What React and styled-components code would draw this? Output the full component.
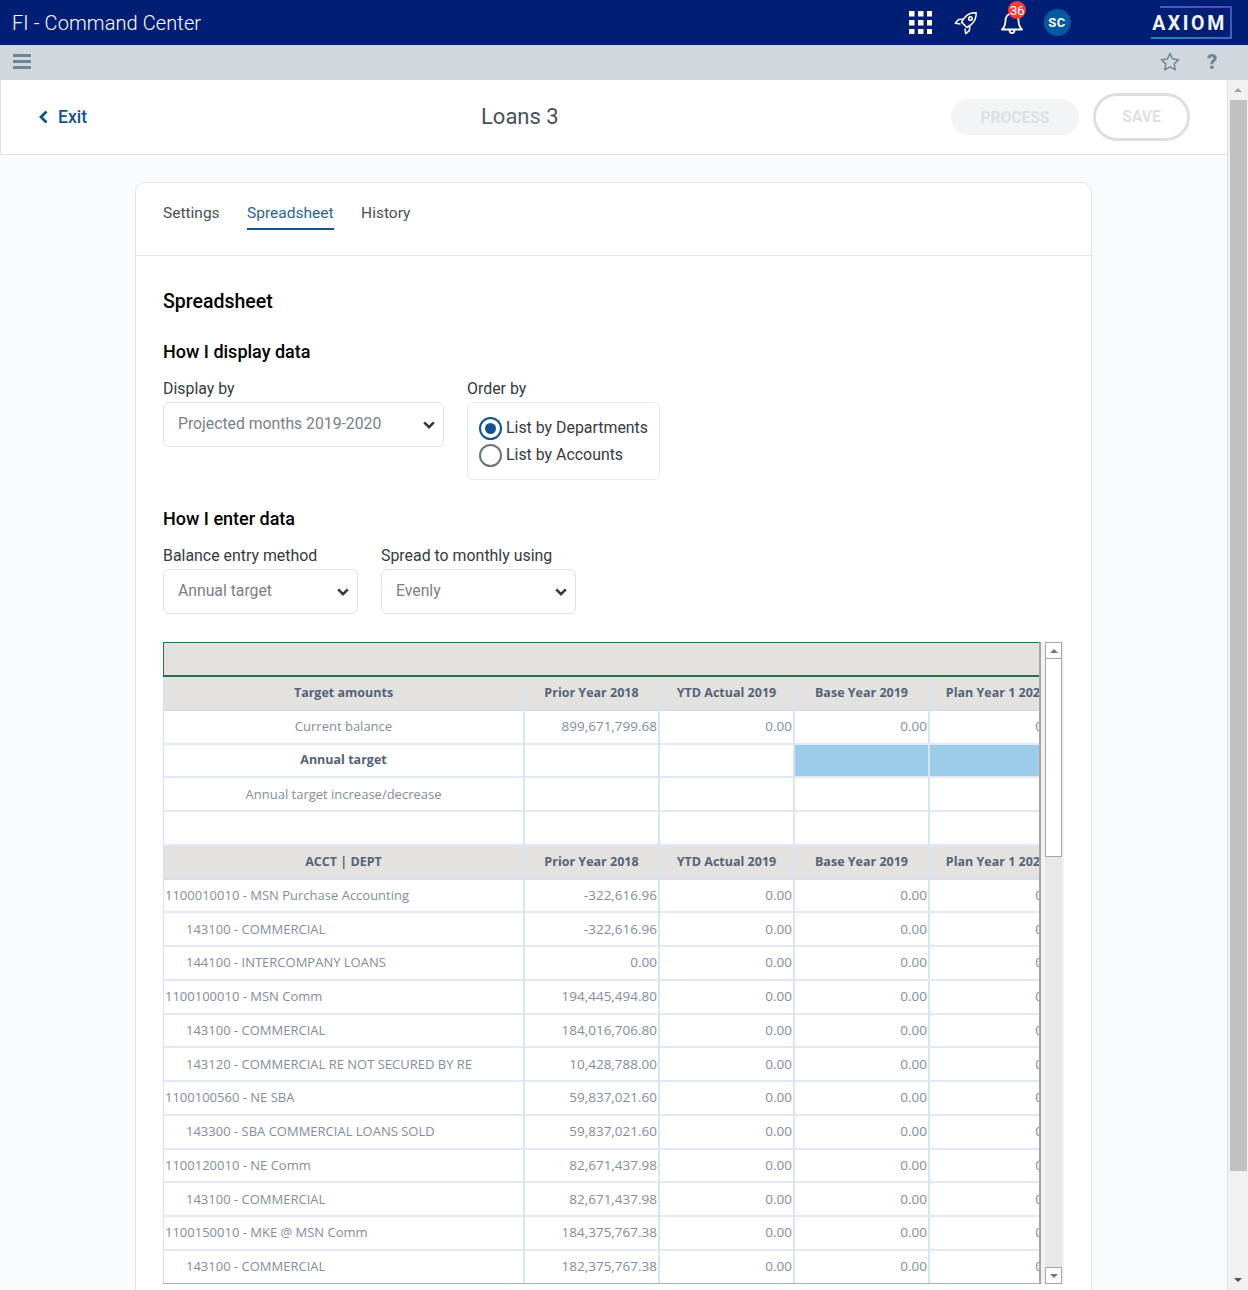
import React from 'react'
import styled, { createGlobalStyle } from 'styled-components'

const GlobalStyle = createGlobalStyle`
  html, body {
    margin: 0;
    padding: 0;
    overflow: hidden;
  }
  body {
    font-family: Roboto, "Liberation Sans", sans-serif;
    background: #fff;
  }
  * {
    box-sizing: border-box;
  }
`

const Frame = styled.div`
  width: 1248px;
  height: 1290px;
  display: flex;
  flex-direction: column;
  overflow: hidden;
`

const TopBar = styled.header`
  height: 45px;
  flex: none;
  background: #001e73;
  display: flex;
  align-items: center;
  padding: 0 16px 0 12px;
  color: #fff;
`

const AppTitle = styled.div`
  font-size: 20px;
  font-weight: 300;
  letter-spacing: 0.1px;
  flex: 1;
`

const TopIcons = styled.div`
  display: flex;
  align-items: center;
  margin-right: 70px;
`

const TopIcon = styled.span`
  position: relative;
  display: flex;
  align-items: center;
  justify-content: center;
  width: ${p => p.$w}px;
`

const Badge = styled.span`
  position: absolute;
  top: -9px;
  left: 19px;
  width: 18px;
  height: 18px;
  border-radius: 50%;
  background: #f53b3b;
  color: #fff;
  font-size: 13.5px;
  letter-spacing: -0.3px;
  line-height: 18px;
  text-align: center;
`

const Avatar = styled.span`
  width: 27px;
  height: 27px;
  border-radius: 50%;
  background: #045a9e;
  color: #fff;
  font-size: 13px;
  font-weight: 700;
  letter-spacing: 0.6px;
  line-height: 27px;
  text-align: center;
`

const Logo = styled.div`
  position: relative;
  width: 82px;
  height: 33px;
  display: flex;
  align-items: center;
  justify-content: center;
  padding: 1px 3px 0 0;
  font-size: 19.5px;
  font-weight: 700;
  letter-spacing: 2.6px;
  color: #f1f4fa;
`

const LogoFrame = styled.svg`
  position: absolute;
  inset: 0;
`

const SubBar = styled.div`
  height: 35px;
  flex: none;
  background: #d0d8dd;
  display: flex;
  align-items: center;
  justify-content: space-between;
  padding: 0 30px 2px 13px;
`

const SubBarRight = styled.div`
  display: flex;
  align-items: center;
  gap: 26px;
`

const Viewport = styled.div`
  flex: 1;
  min-height: 0;
  display: flex;
`

const Page = styled.main`
  width: 1228px;
  background: #fafbfd;
  border-right: 1px solid #dfe2e6;
  overflow: hidden;
`

const PageHeader = styled.div`
  height: 75px;
  background: #fff;
  border: 1px solid #dfe2e6;
  border-top: 0;
  border-right: 0;
  display: grid;
  grid-template-columns: 1fr auto;
  align-items: center;
  position: relative;
  padding: 0 37px 0 37px;
`

const ExitLink = styled.a`
  display: flex;
  align-items: center;
  gap: 9px;
  padding-bottom: 1px;
  color: #0f5490;
  font-size: 17.6px;
  font-weight: 500;
`

const PageTitle = styled.h1`
  position: absolute;
  left: 480px;
  top: 22px;
  margin: 0;
  font-size: 22px;
  line-height: 30px;
  font-weight: 400;
  color: #495057;
`

const HeaderButtons = styled.div`
  display: flex;
  align-items: center;
  gap: 14px;
`

const ProcessButton = styled.button`
  width: 128px;
  height: 36px;
  border: 0;
  border-radius: 18px;
  padding: 1px 0 0;
  background: #f2f4f5;
  color: #dce0e3;
  font: 700 15.6px Roboto, sans-serif;
`

const SaveButton = styled.button`
  width: 97px;
  height: 48px;
  border: 3px solid #dfdfdf;
  border-radius: 24px;
  padding: 0;
  background: #fff;
  color: #dfe2e4;
  font: 700 15.6px Roboto, sans-serif;
`

const Card = styled.section`
  margin: 27px 0 0 135px;
  width: 957px;
  height: 1200px;
  background: #fff;
  border: 1px solid #e0e3e8;
  border-radius: 10px;
`

const Tabs = styled.nav`
  height: 73px;
  border-bottom: 1px solid #e4e6ea;
  display: flex;
  gap: 27.5px;
  padding: 18px 0 0 27px;
`

const Tab = styled.span`
  height: 29px;
  font-size: 15.5px;
  line-height: 24px;
  color: ${p => (p.$active ? '#2a6299' : '#495057')};
  border-bottom: ${p => (p.$active ? '2px solid #0f5490' : '0')};
`

const CardBody = styled.div`
  padding: 34px 27px 0 27px;
`

const SectionTitle = styled.h2`
  margin: 0;
  font-size: 19.5px;
  line-height: 24px;
  font-weight: 500;
  color: #000;
`

const GroupTitle = styled.h3`
  margin: ${p => p.$top}px 0 0;
  font-size: 18px;
  line-height: 24px;
  font-weight: 500;
  color: #000;
`

const FieldRow = styled.div`
  display: flex;
  gap: 23px;
  margin-top: 15px;
  height: ${p => p.$h}px;
`

const Field = styled.div`
  width: ${p => p.$w}px;
`

const FieldLabel = styled.div`
  font-size: 15.9px;
  line-height: 19px;
  color: #343a40;
  margin-bottom: 4px;
`

const SelectBox = styled.div`
  height: 45px;
  border: 1px solid #dee2e6;
  border-radius: 6px;
  background: #fff;
  display: flex;
  align-items: center;
  justify-content: space-between;
  padding: 0 7px 2px 14px;
  font-size: 15.75px;
  color: #7a8087;
  svg {
    margin-top: 3px;
  }
`

const RadioBox = styled.div`
  width: 193px;
  height: 78px;
  border: 1px solid #e9ecef;
  border-radius: 6px;
  padding: 12px 0 0 11px;
`

const RadioRow = styled.label`
  display: flex;
  align-items: center;
  gap: 4px;
  height: 27px;
  font-size: 15.9px;
  color: #343a40;
`

const RadioText = styled.span`
  margin-bottom: 2px;
`

const RadioMark = styled.span`
  width: 23px;
  height: 23px;
  border-radius: 50%;
  background: #fff;
  border: 2px solid ${p => (p.$on ? '#0f5490' : '#6c757d')};
  display: flex;
  align-items: center;
  justify-content: center;
  &::after {
    content: '';
    display: ${p => (p.$on ? 'block' : 'none')};
    width: 11px;
    height: 11px;
    border-radius: 50%;
    background: #0f5490;
  }
`

const SheetWrap = styled.div`
  margin-top: 28px;
  width: 901px;
  height: 643px;
  display: flex;
  align-items: stretch;
  background: #f3f3f3;
  border-bottom: 1px solid #fff;
`

const SheetClip = styled.div`
  width: 878px;
  background: #fff;
  border-right: 2px solid #a6a6a6;
  border-bottom: 1px solid #a9b0c0;
  overflow: hidden;
`

const Banner = styled.div`
  height: 35px;
  width: 876px;
  background: #e3e2e0;
  border: 1px solid #217346;
  border-right: 0;
  border-bottom-width: 2px;
`

const SheetRow = styled.div`
  display: grid;
  grid-template-columns: 361px 135px 135px 135px 135px;
  height: 33.75px;
  width: 903px;
  background: ${p => (p.$head ? '#e3e2e0' : '#fff')};
  border-left: 1px solid #d9e1f2;
  font-family: "Open Sans", "Noto Sans", sans-serif;
  font-size: 13px;
`

const Cell = styled.div`
  border-right: 2px solid #dbe3f3;
  border-bottom: 2px solid ${p => (p.$head ? '#d8dee9' : '#e2e8f5')};
  background: ${p => (p.$fill ? '#9bcdeb' : 'transparent')};
  display: flex;
  align-items: center;
  white-space: nowrap;
  overflow: hidden;
  padding: 0 1px 1px 1px;
  justify-content: ${p => (p.$center ? 'center' : p.$num ? 'flex-end' : 'flex-start')};
  padding-left: ${p => (p.$indent ? '22px' : '1px')};
  color: ${p => (p.$bold ? '#556277' : '#838d9b')};
  font-weight: ${p => (p.$bold ? 700 : 400)};
  font-size: ${p => (p.$bold ? '12.5px' : p.$num ? '13.5px' : '13px')};
`

const InnerScroll = styled.div`
  width: 17px;
  margin-left: 4px;
  background: #e8e8e8;
  display: flex;
  flex-direction: column;
`

const ScrollButton = styled.div`
  height: 17px;
  flex: none;
  background: #fff;
  border: 1px solid #a6a6a6;
  display: flex;
  align-items: center;
  justify-content: center;
  margin-top: ${p => (p.$end ? 'auto' : '0')};
`

const InnerThumb = styled.div`
  height: 198px;
  background: #fff;
  border: 1px solid #a6a6a6;
  border-top: 0;
`

const Arrow = styled.span`
  width: 0;
  height: 0;
  border-left: ${p => p.$s}px solid transparent;
  border-right: ${p => p.$s}px solid transparent;
  border-bottom: ${p => (p.$down ? '0' : `${p.$s}px solid ${p.$c}`)};
  border-top: ${p => (p.$down ? `${p.$s}px solid ${p.$c}` : '0')};
`

const PageScroll = styled.div`
  width: 20px;
  background: #f1f1f1;
  display: flex;
  flex-direction: column;
  align-items: center;
`

const PageScrollEnd = styled.div`
  height: 20px;
  flex: none;
  display: flex;
  align-items: center;
  justify-content: center;
  margin-top: ${p => (p.$end ? 'auto' : '0')};
`

const PageThumb = styled.div`
  width: 17px;
  height: 1071px;
  background: #c1c1c1;
`

const Chevron = () => (
  <svg width="14" height="14" viewBox="0 0 16 16">
    <path d="M2.500 5 8 10.500 13.500 5" fill="none" stroke="#343a40" strokeWidth="3" />
  </svg>
)

const GridIcon = () => (
  <svg width="23" height="23" viewBox="0 0 23 23" fill="#fff">
    {[0, 9, 18].map(y =>
      [0, 9, 18].map(x => <rect key={`${x}-${y}`} x={x} y={y} width="5.5" height="5.5" />)
    )}
  </svg>
)

const RocketIcon = () => (
  <svg width="24" height="24" viewBox="0 0 26 26" fill="none" stroke="#fff" strokeWidth="1.700" strokeLinejoin="round">
    <path d="M24 2c-5.200-.2-9.800 1.800-12.800 5.500l-3 4.500 5.800 5.800 4.500-3c3.700-3 5.700-7.600 5.500-12.800z" />
    <circle cx="17.800" cy="8.200" r="1.900" />
    <path d="M9.800 9 4.800 9.300 1.500 13.300l5.500.8M17 16.200l-.3 5-4 3.300-.8-5.500" />
  </svg>
)

const BellIcon = () => (
  <svg width="24" height="26" viewBox="0 0 24 26" fill="none" stroke="#fff" strokeWidth="1.800" strokeLinejoin="round">
    <path d="M12 3.500c-4 0-6.500 3-6.500 7 0 5-1.500 7-3.500 9h20c-2-2-3.500-4-3.500-9 0-4-2.500-7-6.500-7z" />
    <path d="M9.500 20c0 2 1 3.200 2.500 3.200s2.500-1.200 2.500-3.200" />
  </svg>
)

const MenuIcon = () => (
  <svg width="18" height="15" viewBox="0 0 18 15" fill="#6d8694">
    <rect width="18" height="3" rx="0.5" />
    <rect y="6" width="18" height="3" rx="0.5" />
    <rect y="12" width="18" height="3" rx="0.5" />
  </svg>
)

const StarIcon = () => (
  <svg width="20" height="19" viewBox="0 0 20 19" fill="none" stroke="#6d8694" strokeWidth="1.500" strokeLinejoin="round">
    <path d="M10 1.500l2.600 5.500 6 .8-4.400 4.100 1.100 5.900-5.300-2.900-5.300 2.900 1.100-5.900L1.400 7.800l6-.8z" />
  </svg>
)

const HelpMark = styled.span`
  width: 12px;
  font-size: 20px;
  font-weight: 900;
  line-height: 20px;
  color: #6d8694;
  text-align: center;
`

const targetRows = [
  { label: 'Current balance', nums: ['899,671,799.68', '0.00', '0.00', '0.00'] },
  { label: 'Annual target', bold: true, nums: ['', '', '', ''], fill: true },
  { label: 'Annual target increase/decrease', nums: ['', '', '', ''] },
  { label: '', nums: ['', '', '', ''] },
]

const deptRows = [
  ['1100010010 - MSN Purchase Accounting', '-322,616.96'],
  ['143100 - COMMERCIAL', '-322,616.96', true],
  ['144100 - INTERCOMPANY LOANS', '0.00', true],
  ['1100100010 - MSN Comm', '194,445,494.80'],
  ['143100 - COMMERCIAL', '184,016,706.80', true],
  ['143120 - COMMERCIAL RE NOT SECURED BY RE', '10,428,788.00', true],
  ['1100100560 - NE SBA', '59,837,021.60'],
  ['143300 - SBA COMMERCIAL LOANS SOLD', '59,837,021.60', true],
  ['1100120010 - NE Comm', '82,671,437.98'],
  ['143100 - COMMERCIAL', '82,671,437.98', true],
  ['1100150010 - MKE @ MSN Comm', '184,375,767.38'],
  ['143100 - COMMERCIAL', '182,375,767.38', true],
]

const years = ['Prior Year 2018', 'YTD Actual 2019', 'Base Year 2019', 'Plan Year 1 2020']

const HeadRow = ({ title }) => (
  <SheetRow $head>
    <Cell $head $center $bold>{title}</Cell>
    {years.map(y => (
      <Cell key={y} $head $center $bold>{y}</Cell>
    ))}
  </SheetRow>
)

export default function App() {
  return (
    <Frame>
      <GlobalStyle />
      <TopBar>
        <AppTitle>FI - Command Center</AppTitle>
        <TopIcons>
          <TopIcon $w={46}><GridIcon /></TopIcon>
          <TopIcon $w={46}><RocketIcon /></TopIcon>
          <TopIcon $w={45}><BellIcon /><Badge>36</Badge></TopIcon>
          <TopIcon $w={46}><Avatar>SC</Avatar></TopIcon>
        </TopIcons>
        <Logo>
          <LogoFrame width="82" height="33" viewBox="0 0 82 33" fill="none">
            <defs>
              <linearGradient id="axiomLine" x1="0" y1="1" x2="1" y2="0">
                <stop offset="0" stopColor="#29a9e8" />
                <stop offset="1" stopColor="#7b4fd0" />
              </linearGradient>
            </defs>
            <path d="M10 1h71v31H1" stroke="url(#axiomLine)" strokeWidth="1.500" />
          </LogoFrame>
          AXIOM
        </Logo>
      </TopBar>
      <SubBar>
        <MenuIcon />
        <SubBarRight>
          <StarIcon />
          <HelpMark>?</HelpMark>
        </SubBarRight>
      </SubBar>
      <Viewport>
        <Page>
          <PageHeader>
            <ExitLink>
              <svg width="11" height="14" viewBox="0 0 11 14">
                <path d="M8.500 1.500 3 7l5.500 5.500" fill="none" stroke="#0f5490" strokeWidth="2.800" />
              </svg>
              Exit
            </ExitLink>
            <PageTitle>Loans 3</PageTitle>
            <HeaderButtons>
              <ProcessButton>PROCESS</ProcessButton>
              <SaveButton>SAVE</SaveButton>
            </HeaderButtons>
          </PageHeader>
          <Card>
            <Tabs>
              <Tab>Settings</Tab>
              <Tab $active>Spreadsheet</Tab>
              <Tab>History</Tab>
            </Tabs>
            <CardBody>
              <SectionTitle>Spreadsheet</SectionTitle>
              <GroupTitle $top={26}>How I display data</GroupTitle>
              <FieldRow $h={100}>
                <Field $w={281}>
                  <FieldLabel>Display by</FieldLabel>
                  <SelectBox>Projected months 2019-2020<Chevron /></SelectBox>
                </Field>
                <Field $w={193}>
                  <FieldLabel>Order by</FieldLabel>
                  <RadioBox>
                    <RadioRow><RadioMark $on /><RadioText>List by Departments</RadioText></RadioRow>
                    <RadioRow><RadioMark /><RadioText>List by Accounts</RadioText></RadioRow>
                  </RadioBox>
                </Field>
              </FieldRow>
              <GroupTitle $top={28}>How I enter data</GroupTitle>
              <FieldRow $h={68}>
                <Field $w={195}>
                  <FieldLabel>Balance entry method</FieldLabel>
                  <SelectBox>Annual target<Chevron /></SelectBox>
                </Field>
                <Field $w={195}>
                  <FieldLabel>Spread to monthly using</FieldLabel>
                  <SelectBox>Evenly<Chevron /></SelectBox>
                </Field>
              </FieldRow>
              <SheetWrap>
                <SheetClip>
                  <Banner />
                  <HeadRow title="Target amounts" />
                  {targetRows.map(r => (
                    <SheetRow key={r.label || 'blank'}>
                      <Cell $center $bold={r.bold}>{r.label}</Cell>
                      {r.nums.map((n, i) => (
                        <Cell key={i} $num $fill={r.fill && i > 1}>{n}</Cell>
                      ))}
                    </SheetRow>
                  ))}
                  <HeadRow title="ACCT | DEPT" />
                  {deptRows.map(([label, prior, indent], i) => (
                    <SheetRow key={i}>
                      <Cell $indent={indent}>{label}</Cell>
                      <Cell $num>{prior}</Cell>
                      <Cell $num>0.00</Cell>
                      <Cell $num>0.00</Cell>
                      <Cell $num>0.00</Cell>
                    </SheetRow>
                  ))}
                </SheetClip>
                <InnerScroll>
                  <ScrollButton><Arrow $s={4} $c="#777" /></ScrollButton>
                  <InnerThumb />
                  <ScrollButton $end><Arrow $s={4} $c="#777" $down /></ScrollButton>
                </InnerScroll>
              </SheetWrap>
            </CardBody>
          </Card>
        </Page>
        <PageScroll>
          <PageScrollEnd><Arrow $s={4} $c="#a3a3a3" /></PageScrollEnd>
          <PageThumb />
          <PageScrollEnd $end><Arrow $s={4} $c="#505050" $down /></PageScrollEnd>
        </PageScroll>
      </Viewport>
    </Frame>
  )
}
